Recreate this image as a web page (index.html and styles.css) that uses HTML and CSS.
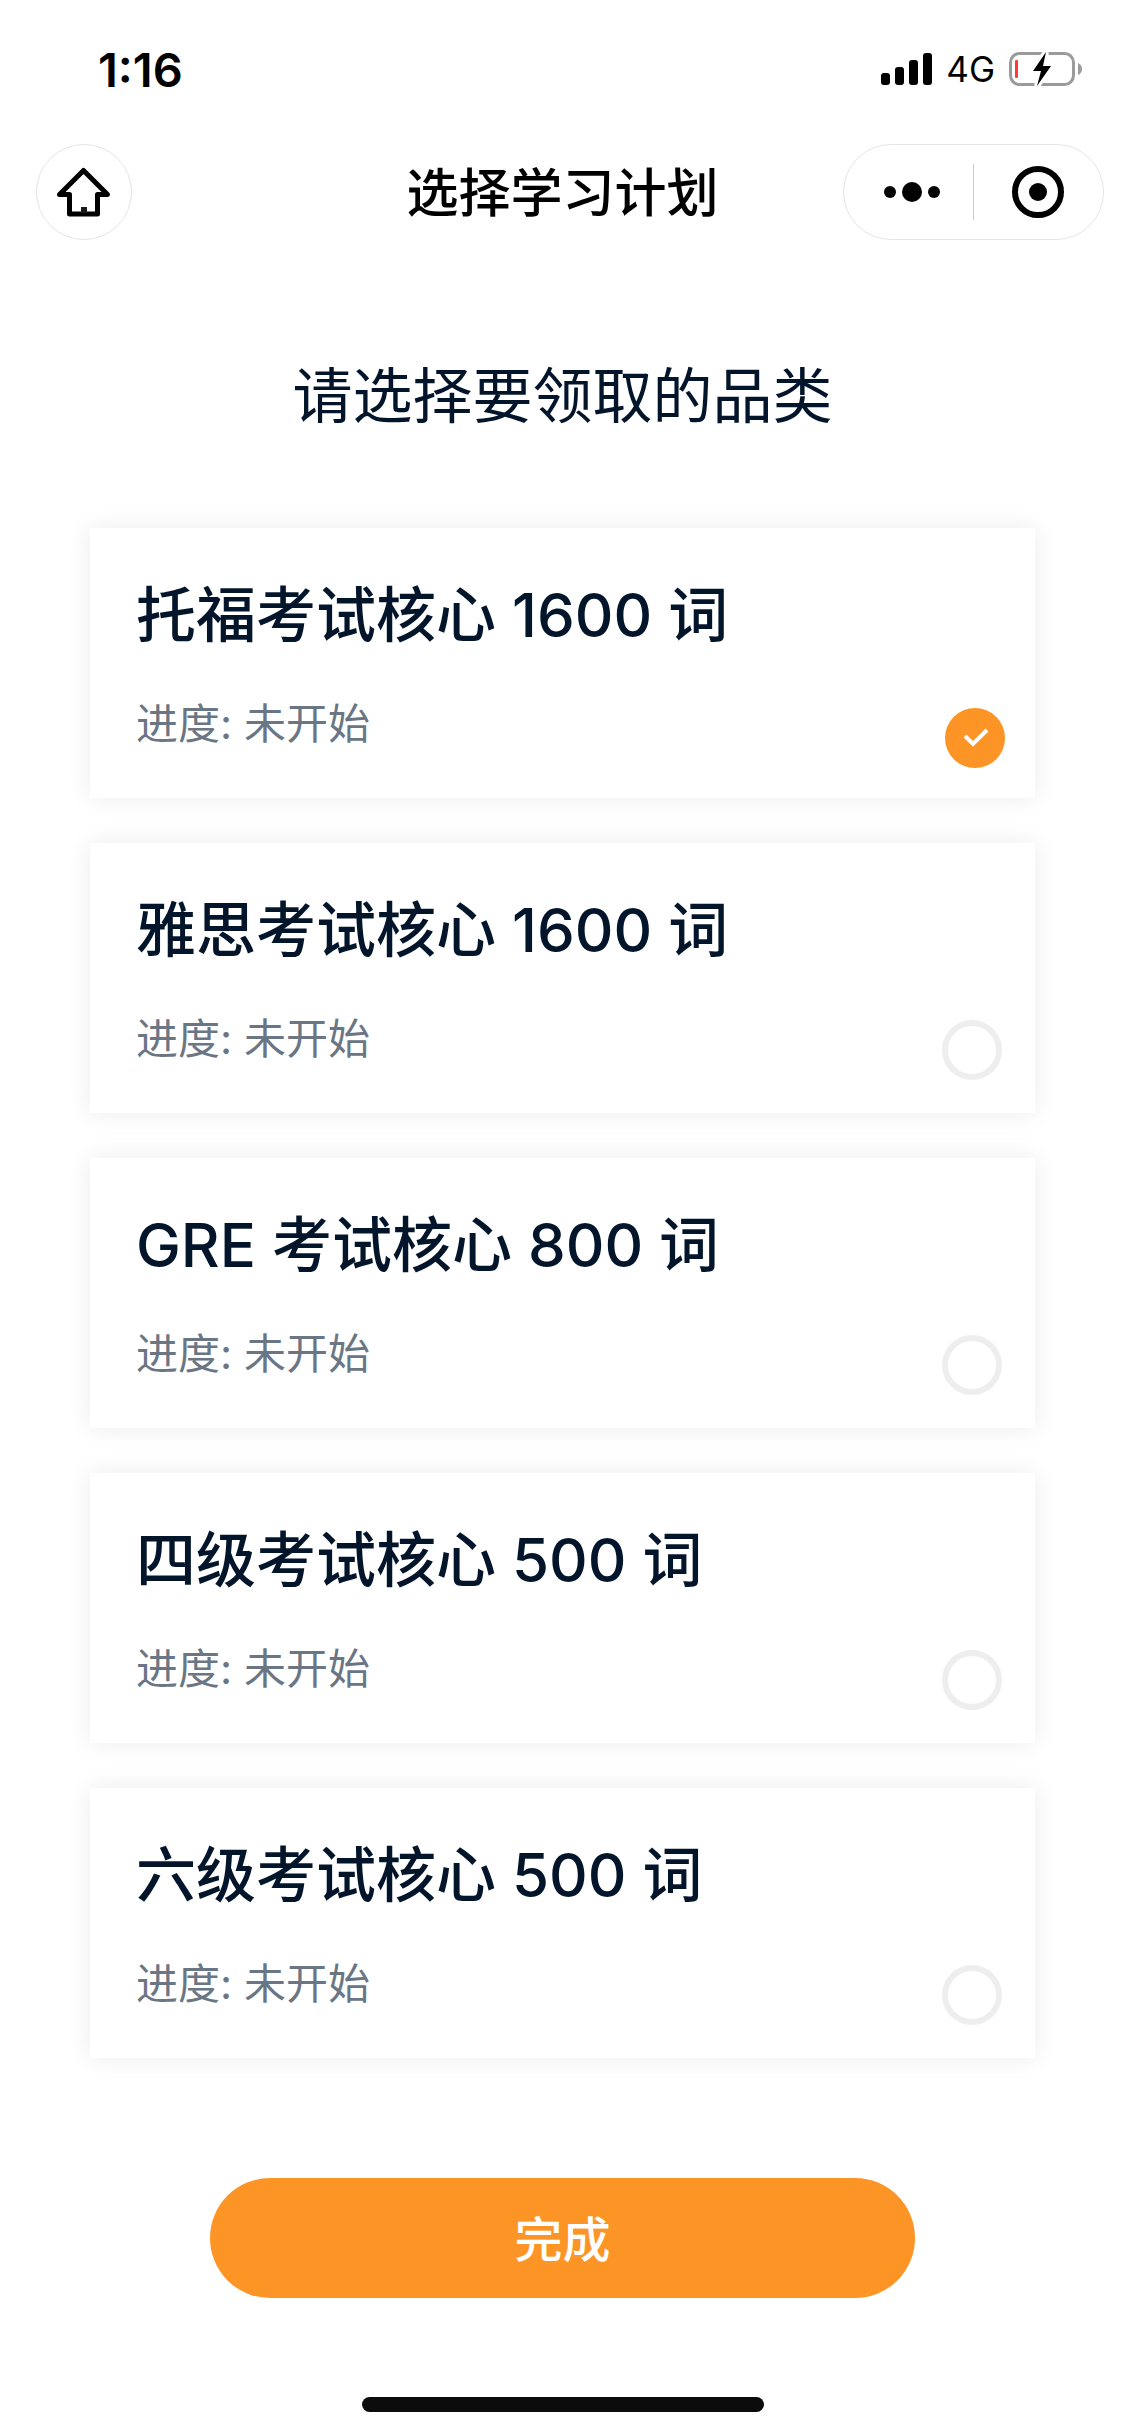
FILE: index.html
```
<!DOCTYPE html>
<html lang="zh-CN">
<head>
    <meta charset="UTF-8">
    <meta name="viewport" content="width=device-width, initial-scale=1.0">
    <title>选择学习计划</title>
    <link rel="stylesheet" href="styles.css">
</head>
<body>
    <div class="status-bar">
        <span class="time">1:16</span>
        <div class="status-icons">
            <svg class="signal" viewBox="0 0 51 32" width="51" height="32">
                <rect x="0" y="20" width="9" height="12" rx="3"/>
                <rect x="14" y="14" width="9" height="18" rx="3"/>
                <rect x="28" y="7" width="9" height="25" rx="3"/>
                <rect x="42" y="0" width="9" height="32" rx="3"/>
            </svg>
            <span class="network">4G</span>
            <svg class="battery" viewBox="0 0 74 36" width="74" height="36">
                <rect x="1.5" y="2.5" width="63" height="31" rx="9" fill="none" stroke="#9b9b9b" stroke-width="3"/>
                <path d="M69 12 Q73 14 73 18 Q73 22 69 24 Z" fill="#9b9b9b"/>
                <rect x="6" y="9" width="3" height="18" rx="1" fill="#ff3b30"/>
                <path d="M37 1 L24 20 L32 20 L28 35 L42 15 L34 15 Z" fill="#000" stroke="#fff" stroke-width="6" paint-order="stroke"/>
            </svg>
        </div>
    </div>

    <header class="nav-bar">
        <button class="home-button" type="button" aria-label="首页">
            <svg viewBox="0 0 96 96" width="96" height="96">
                <path d="M47.5 26.5 L71.5 50.5 H61.5 V70 H33.5 V50.5 H23.5 Z" fill="none" stroke="#000" stroke-width="5" stroke-linejoin="round"/>
                <rect x="45" y="63" width="6" height="6" fill="#1a1a1a"/>
            </svg>
        </button>
        <h1>选择学习计划</h1>
        <div class="capsule">
            <button type="button" aria-label="更多">
                <svg viewBox="0 0 60 60" width="60" height="60">
                    <circle cx="8" cy="30" r="6"/>
                    <circle cx="30" cy="30" r="10"/>
                    <circle cx="52" cy="30" r="6"/>
                </svg>
            </button>
            <button type="button" aria-label="关闭">
                <svg viewBox="0 0 60 60" width="60" height="60">
                    <circle cx="30" cy="30" r="23" fill="none" stroke="#000" stroke-width="6"/>
                    <circle cx="30" cy="30" r="9"/>
                </svg>
            </button>
        </div>
    </header>

    <main>
        <h2>请选择要领取的品类</h2>
        <form id="plan-form">
            <label class="plan-card">
                <span class="plan-text">
                    <span class="plan-name">托福考试核心 1600 词</span>
                    <span class="plan-progress">进度: 未开始</span>
                </span>
                <input type="radio" name="plan" value="toefl" checked>
            </label>
            <label class="plan-card">
                <span class="plan-text">
                    <span class="plan-name">雅思考试核心 1600 词</span>
                    <span class="plan-progress">进度: 未开始</span>
                </span>
                <input type="radio" name="plan" value="ielts">
            </label>
            <label class="plan-card">
                <span class="plan-text">
                    <span class="plan-name">GRE 考试核心 800 词</span>
                    <span class="plan-progress">进度: 未开始</span>
                </span>
                <input type="radio" name="plan" value="gre">
            </label>
            <label class="plan-card">
                <span class="plan-text">
                    <span class="plan-name">四级考试核心 500 词</span>
                    <span class="plan-progress">进度: 未开始</span>
                </span>
                <input type="radio" name="plan" value="cet4">
            </label>
            <label class="plan-card">
                <span class="plan-text">
                    <span class="plan-name">六级考试核心 500 词</span>
                    <span class="plan-progress">进度: 未开始</span>
                </span>
                <input type="radio" name="plan" value="cet6">
            </label>
            <button class="done-button" type="submit">完成</button>
        </form>
    </main>

    <div class="home-indicator"></div>
</body>
</html>
```
FILE: styles.css
```
* {
    box-sizing: border-box;
}

body {
    display: flex;
    flex-direction: column;
    min-height: 100vh;
    margin: 0;
    font-family: Inter, "Noto Sans CJK SC", sans-serif;
    background-color: #fff;
    color: #03152a;
}

button {
    padding: 0;
    border: none;
    background: none;
    font-family: inherit;
    cursor: pointer;
}

svg {
    display: block;
}

/* Status bar */
.status-bar {
    display: flex;
    justify-content: space-between;
    align-items: center;
    height: 138px;
    padding: 0 42px 0 98px;
    color: #000;
}

.time {
    font-size: 47px;
    font-weight: 600;
}

.status-icons {
    display: flex;
    align-items: center;
    gap: 14px;
}

.network {
    font-size: 35px;
    font-weight: 400;
}

/* Navigation bar */
.nav-bar {
    display: grid;
    grid-template-columns: 1fr auto 1fr;
    align-items: center;
    padding: 6px 21px;
    color: #000;
}

.nav-bar h1 {
    margin: 0;
    padding-top: 3px;
    font-size: 52px;
    font-weight: 500;
    line-height: 72px;
}

.home-button {
    width: 96px;
    height: 96px;
    margin-left: 15px;
    border: 1px solid #e5e5e5;
    border-radius: 50%;
}

.home-button svg {
    margin: -1px;
}

.capsule {
    display: flex;
    justify-self: end;
    align-items: center;
    width: 261px;
    height: 96px;
    border: 1px solid #e5e5e5;
    border-radius: 48px;
}

.capsule button {
    display: flex;
    align-items: center;
    justify-content: center;
    width: 50%;
    height: 56px;
}

.capsule button:first-child {
    padding-left: 8px;
    border-right: 1px solid #ccc;
}

/* Plan list */
main {
    padding: 0 90px;
}

h2 {
    margin: 108px 0 90px;
    font-size: 60px;
    font-weight: 400;
    line-height: 84px;
    text-align: center;
}

form {
    display: flex;
    flex-direction: column;
    gap: 45px;
}

.plan-card {
    display: flex;
    justify-content: space-between;
    align-items: flex-end;
    padding: 45px 30px 30px 46px;
    background-color: #fff;
    box-shadow: 0 0 24px rgba(3, 21, 42, 0.08);
    cursor: pointer;
}

.plan-text {
    display: flex;
    flex-direction: column;
    gap: 37px;
    padding-bottom: 14px;
}

.plan-name {
    font-size: 60px;
    font-weight: 500;
    line-height: 84px;
}

.plan-progress {
    font-size: 42px;
    line-height: 60px;
    color: #6b7685;
}

.plan-card input {
    appearance: none;
    flex-shrink: 0;
    width: 60px;
    height: 60px;
    margin: 0 3px 3px 0;
    border: 6px solid #eee;
    border-radius: 50%;
}

.plan-card input:checked {
    margin: 0;
    border: none;
    background: #fd9426 url("data:image/svg+xml,%3Csvg xmlns='http://www.w3.org/2000/svg' viewBox='0 0 60 60'%3E%3Cpath d='M20 28 L28 36 L42 22' fill='none' stroke='white' stroke-width='4'/%3E%3C/svg%3E");
}

.done-button {
    height: 120px;
    margin: 75px 120px 0;
    padding-bottom: 4px;
    border-radius: 60px;
    background-color: #fd9426;
    color: #fff;
    font-size: 48px;
    font-weight: 500;
}

.home-indicator {
    width: 402px;
    height: 15px;
    margin: auto auto 24px;
    border-radius: 8px;
    background-color: #0c0c0c;
}
```
